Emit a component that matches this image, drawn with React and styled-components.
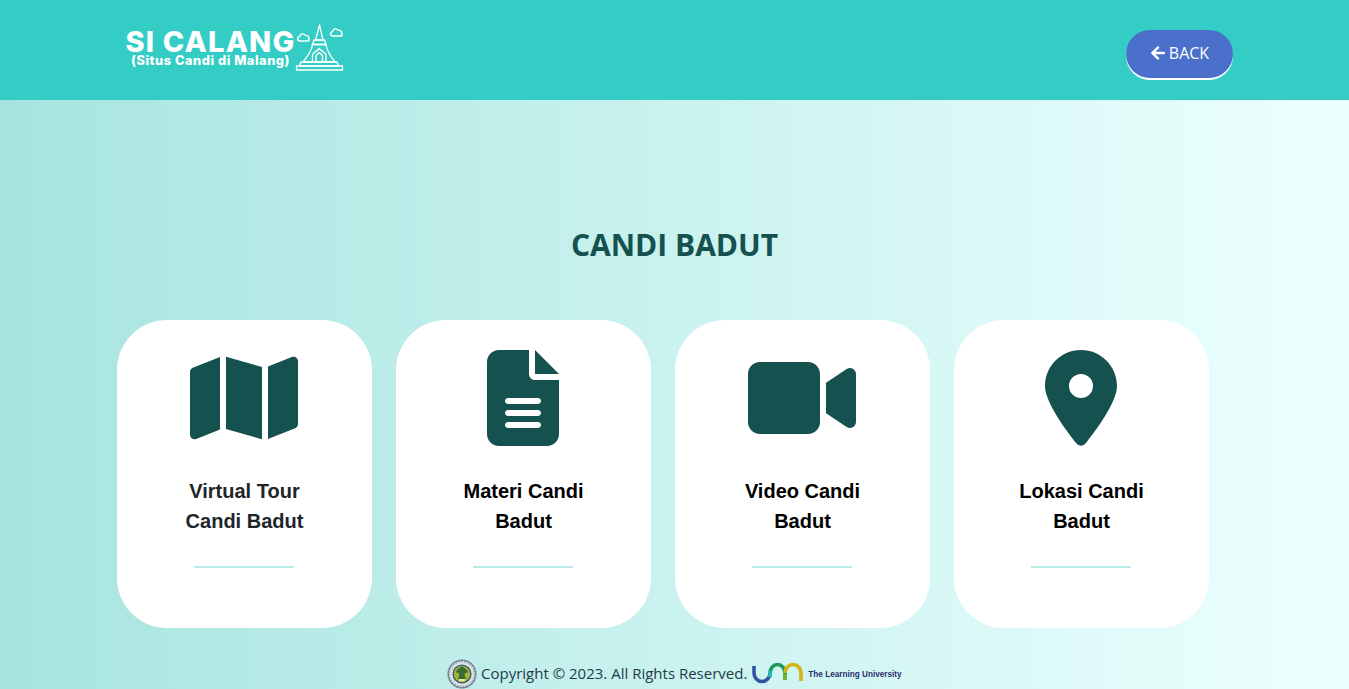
import React from "react";
import styled, { createGlobalStyle } from "styled-components";
import { FaArrowLeft } from "react-icons/fa";
import { FaMap, FaFileLines, FaVideo, FaLocationDot } from "react-icons/fa6";

const Global = createGlobalStyle`
  html, body { margin: 0; padding: 0; height: 689px; overflow: hidden; }
  body { font-family: "Open Sans", sans-serif; }
`;

const Page = styled.div`
  height: 689px;
  overflow: hidden;
  background: linear-gradient(to right, #a7e4df 0%, #eafffe 96%);
`;

const Header = styled.header`
  height: 100px;
  background: #33cdc6;
  display: flex;
  align-items: center;
  justify-content: space-between;
  padding: 0 116px 0 126px;
`;

const Logo = styled.div`
  display: flex;
  align-items: flex-start;
  height: 48px;
  margin-top: -6px;
`;

const LogoText = styled.div`
  width: 169px;
  display: flex;
  flex-direction: column;
  align-items: center;
  color: #fff;
  font-family: Inter, sans-serif;
  font-weight: 800;
  padding-top: 7px;
`;

const LogoTitle = styled.span`
  font-size: 29px;
  line-height: 24px;
  letter-spacing: 1.15px;
  white-space: nowrap;
`;

const LogoSub = styled.span`
  font-size: 12.8px;
  line-height: 13px;
  letter-spacing: 0.55px;
  margin-top: 0;
  white-space: nowrap;
`;

const BackButton = styled.button`
  width: 107px;
  height: 48px;
  margin-top: 8px;
  border: 0;
  border-radius: 24px;
  background: #4a70cb;
  box-shadow: 0 2px 0 #fff;
  color: #fff;
  font: 400 16px/46px "Open Sans", sans-serif;
  display: flex;
  align-items: center;
  justify-content: center;
  gap: 3px;
  padding: 0 0 2px;
`;

const Heading = styled.h1`
  margin: 0;
  padding-top: 125px;
  height: 95px;
  text-align: center;
  font: 700 30px/40px "Open Sans", sans-serif;
  color: #15514f;
`;

const Cards = styled.section`
  display: grid;
  grid-template-columns: repeat(4, 255px);
  gap: 24px;
  padding-left: 117px;
`;

const Card = styled.article`
  height: 308px;
  box-sizing: border-box;
  background: #fff;
  border-radius: 50px;
  padding-top: 30px;
  display: flex;
  flex-direction: column;
  align-items: center;
`;

const IconWrap = styled.div`
  height: 96px;
  margin-right: 2px;
  color: #15514f;
  line-height: 0;
  svg {
    display: block;
    width: ${p => p.$w}px;
    height: 96px;
  }
`;

const CardTitle = styled.h2`
  margin: 30px 0 0;
  width: 135px;
  text-align: center;
  font: 700 20px/30px "Liberation Sans", Arial, sans-serif;
  color: ${p => p.$color};
`;

const Divider = styled.div`
  width: 100px;
  height: 2px;
  margin: 30px 2px 0 0;
  background: #b9ece8;
`;

const Footer = styled.footer`
  display: flex;
  align-items: center;
  padding: 30px 0 0 447px;
  height: 30px;
  font-size: 15px;
  color: #1f3b47;
  white-space: nowrap;
`;

const Copy = styled.span`
  margin: 0 4px;
  line-height: 30px;
`;

const Tagline = styled.span`
  font: 700 8.2px "Liberation Sans", Arial, sans-serif;
  color: #2a2f70;
  margin-left: 3px;
  padding-top: 3px;
`;

const Temple = () => (
  <svg width="50" height="50" viewBox="0 0 50 50" fill="none" stroke="#fff" strokeWidth="1.35" strokeLinejoin="round">
    <path d="M24.5 2 L28 17 H20.5 Z" />
    <path d="M19 17 H29.5 L31 21.5 H17.5 Z" />
    <path d="M17.5 21.5 H31 C32 29 36 34 40 39 H8 C12 34 16.5 29 17.5 21.5 Z" />
    <path d="M17.5 39 V32 C17.5 29.5 22 28.5 24.2 25.5 C26.5 28.5 31 29.5 31 32 V39" />
    <path d="M21 39 V33 C21 31.5 23 31 24.2 29.5 C25.5 31 27.5 31.5 27.5 33 V39" />
    <path d="M6 39 H42 L43.5 43 H4.5 Z" />
    <path d="M1.5 43 H47.5 V47 H1.5 Z" />
    <path d="M5 18 C2 18 1.5 14 4.5 13.6 C5 10.5 9 10 10.2 12.4 C12.8 12 14.5 14 13.5 15.6 C15 16.5 14 18 12.5 18 Z" />
    <path d="M38 13 C35 13 34.5 9 37.5 8.6 C38 5.5 42 5 43.2 7.4 C45.8 7 47.5 9 46.5 10.6 C48 11.5 47 13 45.5 13 Z" />
  </svg>
);

const Emblem = () => (
  <svg width="30" height="30" viewBox="0 0 30 30" style={{ marginTop: 2 }}>
    <circle cx="15" cy="15" r="14.5" fill="#7e8b9c" />
    <circle cx="15" cy="15" r="13" fill="#dfe7e6" />
    <circle cx="15" cy="15" r="13" fill="none" stroke="#6d7a90" strokeWidth="3" strokeDasharray="1.5 1.5" opacity=".55" />
    <circle cx="15" cy="15" r="9.6" fill="#2f5a78" />
    <circle cx="15" cy="15" r="8.3" fill="#9fb23a" />
    <path d="M15 7.5 C12 9 9 11 9 14 C11 13 12 14 12.5 16 L11 20 H19 L17.5 16 C18 14 19 13 21 14 C21 11 18 9 15 7.5 Z" fill="#3d6a34" />
    <rect x="12" y="20" width="6" height="2.4" fill="#f0e68a" />
  </svg>
);

const UmMark = () => (
  <svg width="54" height="24" viewBox="0 0 54 24" fill="none" strokeWidth="3.6" style={{ marginTop: 1 }}>
    <path d="M3 4 V11 A8 8.5 0 0 0 19 11" stroke="#2f55a0" />
    <path d="M19 11 A7.5 8.5 0 0 1 34 11 V18" stroke="#1e9a5c" />
    <path d="M19 15 V9" stroke="#25b6b8" />
    <path d="M34 11 A8 8.5 0 0 1 50 11 V19" stroke="#d2b414" />
    <path d="M34 12 V18" stroke="#6fb52c" />
  </svg>
);

const items = [
  { icon: <FaMap />, w: 108, text: "Virtual Tour Candi Badut", color: "#212529" },
  { icon: <FaFileLines />, w: 72, text: "Materi Candi Badut", color: "#000" },
  { icon: <FaVideo />, w: 108, text: "Video Candi Badut", color: "#000" },
  { icon: <FaLocationDot />, w: 72, text: "Lokasi Candi Badut", color: "#000" },
];

export default function App() {
  return (
    <Page>
      <Global />
      <Header>
        <Logo>
          <LogoText>
            <LogoTitle>SI CALANG</LogoTitle>
            <LogoSub>(Situs Candi di Malang)</LogoSub>
          </LogoText>
          <Temple />
        </Logo>
        <BackButton><FaArrowLeft size={16} /> BACK</BackButton>
      </Header>
      <Heading>CANDI BADUT</Heading>
      <Cards>
        {items.map(i => (
          <Card key={i.text}>
            <IconWrap $w={i.w}>{i.icon}</IconWrap>
            <CardTitle $color={i.color}>{i.text}</CardTitle>
            <Divider />
          </Card>
        ))}
      </Cards>
      <Footer>
        <Emblem />
        <Copy>Copyright © 2023. All Rights Reserved.</Copy>
        <UmMark />
        <Tagline>The Learning University</Tagline>
      </Footer>
    </Page>
  );
}
